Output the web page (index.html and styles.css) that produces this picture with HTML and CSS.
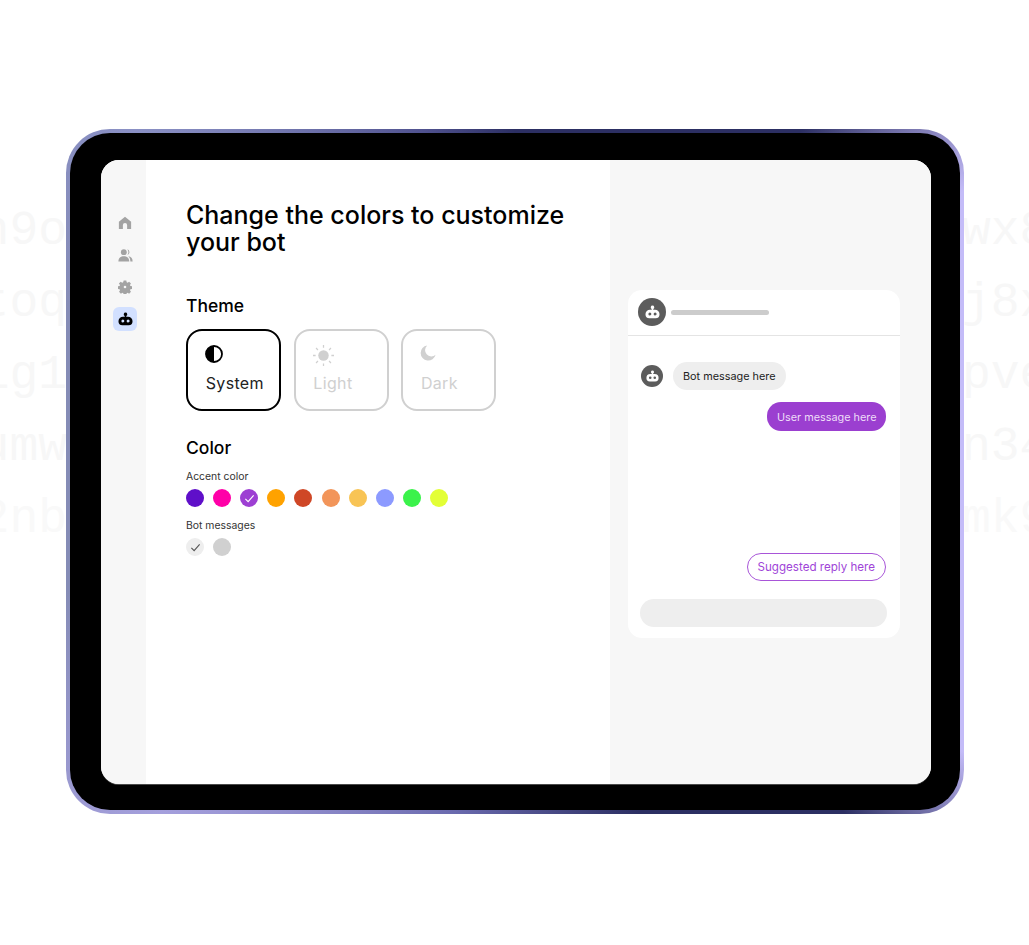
FILE: index.html
```html
<!DOCTYPE html>
<html lang="en">
<head>
<meta charset="utf-8">
<title>Customize your bot</title>
<link rel="stylesheet" href="styles.css">
</head>
<body>
<div class="stage">
  <div class="bg-rows" aria-hidden="true">
    <div class="bg-row"><span class="bg-left">n9o</span><span class="bg-right">wx8</span></div>
    <div class="bg-row"><span class="bg-left">toq</span><span class="bg-right">j8x</span></div>
    <div class="bg-row"><span class="bg-left">1g1</span><span class="bg-right">pve</span></div>
    <div class="bg-row"><span class="bg-left">umw</span><span class="bg-right">n34</span></div>
    <div class="bg-row bg-row-faint"><span class="bg-left">2nb</span><span class="bg-right">mk9</span></div>
  </div>
  <div class="device">
    <div class="bezel">
      <div class="screen">
        <nav class="sidebar">
          <div class="nav-item"><svg class="nav-icon" viewBox="0 0 16 16"><path d="M8 .8 1 6.600v8.200h4.600v-4.400a2.400 2.400 0 0 1 4.800 0v4.400H15V6.600z"/></svg></div>
          <div class="nav-item"><svg class="nav-icon nav-icon-lg" viewBox="0 0 16 16"><circle cx="6.200" cy="4.400" r="3.100"/><path d="M.4 14.400c0-3.800 2.500-5.700 5.800-5.700s5.800 1.900 5.800 5.700z"/><path d="M9.900 1.400a3.100 3.100 0 0 1 0 6 4.700 4.700 0 0 0 0-6zM11 8.800c2.800.3 4.600 2.200 4.600 5.600h-2.400c0-2.200-.7-4.200-2.200-5.600z"/></svg></div>
          <div class="nav-item"><svg class="nav-icon" viewBox="0 0 16 16"><path fill-rule="evenodd" d="M6.500.6h3l.4 2 1.100.5 1.700-1.100 2.100 2.100-1.100 1.700.5 1.100 2 .4v3l-2 .4-.5 1.100 1.100 1.700-2.100 2.100-1.700-1.100-1.100.5-.4 2h-3l-.4-2-1.100-.5-1.700 1.100-2.100-2.100 1.100-1.700-.5-1.100-2-.4v-3l2-.4.5-1.100L1 4.100l2.100-2.100 1.700 1.100 1.100-.5zM8 6.500a1.500 1.500 0 1 0 0 3 1.500 1.500 0 0 0 0-3z"/></svg></div>
          <div class="nav-item nav-item-active"><svg class="nav-icon nav-icon-lg" viewBox="0 0 16 16"><use href="#bot"/></svg></div>
        </nav>
        <main class="editor">
          <h1 class="title">Change the colors to customize your bot</h1>
          <h2 class="section-title">Theme</h2>
          <div class="themes">
            <div class="theme theme-on">
              <svg class="theme-icon" viewBox="0 0 20 20"><circle cx="10" cy="10" r="8.900" fill="none" stroke="currentColor" stroke-width="2"/><path d="M10 1a9 9 0 0 0 0 18z" fill="currentColor"/></svg>
              <span class="theme-name">System</span>
            </div>
            <div class="theme">
              <svg class="theme-icon theme-icon-sun" viewBox="0 0 20 20"><circle cx="10" cy="10" r="5" fill="currentColor"/><path d="M10 0v2.500M10 17.500V20M0 10h2.500M17.500 10H20M2.900 2.900l1.800 1.800M15.300 15.300l1.800 1.800M2.900 17.100l1.800-1.800M15.300 4.700l1.800-1.800" stroke="currentColor" stroke-width="1.200" fill="none"/></svg>
              <span class="theme-name">Light</span>
            </div>
            <div class="theme">
              <svg class="theme-icon theme-icon-moon" viewBox="0 0 20 20"><path d="M9 .5a9.500 9.500 0 1 0 10.500 11.800 7.600 7.600 0 0 1-10.500-11.800z" fill="currentColor"/></svg>
              <span class="theme-name">Dark</span>
            </div>
          </div>
          <h2 class="section-title section-color">Color</h2>
          <p class="field-label">Accent color</p>
          <div class="swatches">
            <span class="swatch" style="background:#5f0fc9"></span>
            <span class="swatch" style="background:#ff00a8"></span>
            <span class="swatch" style="background:#9d3fd3"><svg class="check" viewBox="0 0 12 12"><path d="M1.500 6.500 4.500 9.500 10.500 2.500"/></svg></span>
            <span class="swatch" style="background:#ffa200"></span>
            <span class="swatch" style="background:#cf4726"></span>
            <span class="swatch" style="background:#f2955a"></span>
            <span class="swatch" style="background:#f8c455"></span>
            <span class="swatch" style="background:#8c9aff"></span>
            <span class="swatch" style="background:#3bf24b"></span>
            <span class="swatch" style="background:#e3ff36"></span>
          </div>
          <p class="field-label field-label-bot">Bot messages</p>
          <div class="swatches">
            <span class="swatch" style="background:#eeeeee"><svg class="check check-dark" viewBox="0 0 12 12"><path d="M1.500 6.500 4.500 9.500 10.500 2.500"/></svg></span>
            <span class="swatch" style="background:#d0d0d0"></span>
          </div>
        </main>
        <aside class="preview">
          <div class="chat">
            <header class="chat-head">
              <span class="avatar avatar-lg"><svg viewBox="0 0 16 16"><use href="#bot"/></svg></span>
              <span class="skeleton"></span>
            </header>
            <div class="chat-body">
              <div class="row-bot">
                <span class="avatar avatar-sm"><svg viewBox="0 0 16 16"><use href="#bot"/></svg></span>
                <span class="bubble bubble-bot">Bot message here</span>
              </div>
              <span class="bubble bubble-user">User message here</span>
              <span class="bubble bubble-suggest">Suggested reply here</span>
              <div class="chat-input"></div>
            </div>
          </div>
        </aside>
      </div>
    </div>
  </div>
</div>
<svg class="defs" aria-hidden="true"><defs><symbol id="bot" viewBox="0 0 16 16"><path fill-rule="evenodd" d="M8 .6a1.900 1.900 0 0 1 .8 3.620V5h1.900a4.800 4.800 0 0 1 4.800 4.800 4.200 4.200 0 0 1-4.200 4.200H4.700A4.200 4.200 0 0 1 .5 9.800 4.800 4.800 0 0 1 5.300 5h1.900v-.78A1.900 1.900 0 0 1 8 .6zM5.200 7.900a1.600 1.600 0 1 0 0 3.200 1.600 1.600 0 0 0 0-3.200zm5.600 0a1.600 1.600 0 1 0 0 3.200 1.600 1.600 0 0 0 0-3.200z"/></symbol></defs></svg>
</body>
</html>
```
FILE: styles.css
```css
* { box-sizing: border-box; }
html, body { margin: 0; height: 100%; background: #fff; }
body { font-family: Inter, "Liberation Sans", sans-serif; color: #000; }
.defs { position: absolute; width: 0; height: 0; }
.stage { position: relative; width: 1029px; height: 945px; overflow: hidden; }
.bg-rows { padding-top: 195px; font-family: "Liberation Mono", monospace; font-size: 48px; line-height: 72px; color: #f7f7f7; }
.bg-row { display: grid; grid-template-columns: 67px 1fr; column-gap: 895px; white-space: nowrap; }
.bg-row-faint { color: #f9f9f9; }
.bg-left { display: flex; justify-content: flex-end; }
.device { position: absolute; left: 66px; top: 129px; width: 898px; height: 685px; padding: 4px; border-radius: 44px;
  background: conic-gradient(from 0deg at 50% 50%, #2c2f63 0deg, #2c2f63 40deg, #c4bcf8 58deg, #c4bcf8 122deg, #2c2f63 136deg, #2c2f63 160deg, #6a6aae 190deg, #a49fdc 226deg, #858cb6 255deg, #858cb6 290deg, #8a90c4 312deg, #50528f 345deg, #2c2f63 360deg); }
.bezel { height: 100%; padding: 27px 29px 26px 31px; background: #000; border-radius: 40px; }
.screen { display: flex; height: 100%; border-radius: 18px; overflow: hidden; background: #fff; box-shadow: 0 1px 0 #4a4a4a; }
.sidebar { flex: none; width: 45px; padding-top: 51px; padding-left: 3px; background: #f7f7f7; display: flex; flex-direction: column; align-items: center; gap: 8px; }
.nav-item { width: 24px; height: 24px; border-radius: 6px; display: flex; align-items: center; justify-content: center; color: #a3a3a3; }
.nav-item-active { background: #d2e0ff; color: #000; }
.nav-icon { width: 14px; height: 14px; fill: currentColor; }
.nav-icon-lg { width: 15px; height: 15px; }
.editor { flex: 1; padding: 42px 40px 0; background: #fff; }
.title { margin: 0; max-width: 400px; font-size: 25px; line-height: 27px; font-weight: 500; }
.section-title { margin: 38px 0 0; font-size: 17.500px; line-height: 24px; font-weight: 500; }
.section-color { margin-top: 25px; }
.themes { display: flex; gap: 12.600px; margin-top: 11px; }
.theme { width: 95px; height: 82px; padding: 14px 17px 0; border: 2px solid #d0d0d0; border-radius: 16px; color: #d0d0d0; display: flex; flex-direction: column; gap: 10px; }
.theme-on { border-color: #000; color: #000; }
.theme-icon { width: 18px; height: 18px; flex: none; }
.theme-icon-sun { width: 21px; height: 21px; margin-bottom: -3px; }
.theme-icon-moon { width: 16px; height: 16px; margin-bottom: 2px; }
.theme-name { margin-left: .7px; font-size: 16px; line-height: 20px; letter-spacing: .35px; }
.theme-on .theme-name { color: #222; }
.field-label { margin: 9px 0 0; font-size: 10.400px; line-height: 16px; color: #333; }
.field-label-bot { margin-top: 11px; }
.swatches { display: flex; gap: 9.110px; margin-top: 4px; }
.swatch { width: 18px; height: 18px; border-radius: 50%; display: flex; align-items: center; justify-content: center; }
.check { width: 11px; height: 11px; fill: none; stroke: #fff; stroke-width: 1.200; }
.check-dark { stroke: #555; }
.preview { flex: none; width: 321px; padding: 130px 31px 0 18px; background: #f7f7f7; }
.chat { height: 348px; background: #fff; border-radius: 14px; display: flex; flex-direction: column; }
.chat-head { flex: none; height: 46px; padding: 8px 10px 0; border-bottom: 1px solid #e4e4e4; display: flex; align-items: flex-start; gap: 5px; }
.avatar { flex: none; border-radius: 50%; background: #5c5c5c; display: flex; align-items: center; justify-content: center; }
.avatar svg { fill: #fff; }
.avatar-lg { width: 28px; height: 28px; }
.avatar-lg svg { width: 15px; height: 15px; }
.avatar-sm { width: 22px; height: 22px; }
.avatar-sm svg { width: 13px; height: 13px; }
.skeleton { width: 98px; height: 5px; margin-top: 12px; border-radius: 3px; background: #cccccc; }
.chat-body { flex: 1; padding: 26px 14px 11px 12px; display: flex; flex-direction: column; align-items: flex-end; }
.row-bot { align-self: flex-start; display: flex; align-items: center; gap: 10px; padding-left: 1px; }
.bubble { display: block; font-size: 10.850px; line-height: 14px; padding: 7px 10px; border-radius: 14px; white-space: nowrap; }
.bubble-bot { background: #eeeeee; color: #222; padding-right: 10.500px; }
.bubble-user { margin-top: 12px; background: #9b3fd0; color: #eedcf8; padding: 7.500px 9.500px; }
.bubble-suggest { margin-top: auto; border: 1px solid #a855d8; background: #fff; color: #a045d8; padding: 6px 10px; font-size: 11.600px; }
.chat-input { flex: none; align-self: stretch; height: 28px; margin: 18px -1px 0 0; border-radius: 14px; background: #eeeeee; }
```
